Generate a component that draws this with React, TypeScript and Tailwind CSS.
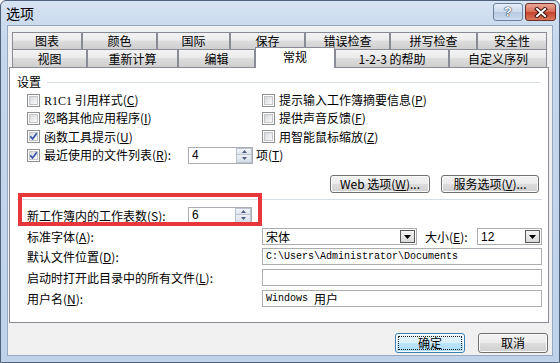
import React from "react";

const cjk = "font-['Noto_Sans_CJK_SC',sans-serif]";
const mono = "font-['Liberation_Mono',monospace] text-[10px]";

const row1 = [
  { label: "图表", w: "w-[70px]" },
  { label: "颜色", w: "w-[75px]" },
  { label: "国际", w: "w-[73px]" },
  { label: "保存", w: "w-[75px]" },
  { label: "错误检查", w: "w-[85px]" },
  { label: "拼写检查", w: "w-[87px]" },
  { label: "安全性", w: "w-[70px]" },
];

const row2 = [
  { label: "视图", w: "w-[75px]" },
  { label: "重新计算", w: "w-[91px]" },
  { label: "编辑", w: "w-[77px]" },
  { label: "常规", w: "w-[80px]", active: true },
  { label: "1-2-3 的帮助", w: "w-[114px]" },
  { label: "自定义序列", w: "w-[98px]" },
];

const tabBg =
  "bg-[linear-gradient(#f3f3f3_0%,#ebebeb_45%,#dddddd_50%,#cfcfcf_100%)]";

function Key({ k }: { k: string }) {
  return (
    <>
      (<span className="underline underline-offset-[1px]">{k}</span>)
    </>
  );
}

function Check({ checked }: { checked?: boolean }) {
  return (
    <span className="relative flex h-[13px] w-[13px] shrink-0 items-center justify-center border border-[#8e8f8f] bg-white">
      <span className="h-[9px] w-[9px] border border-[#c4c6c9] bg-[linear-gradient(135deg,#d6d8db,#fbfbfb)]" />
      {checked && (
        <svg className="absolute left-[1px] top-[1px]" width="9" height="9" viewBox="0 0 9 9">
          <path d="M1.3 4.4 L3.6 6.9 L7.8 1.2" fill="none" stroke="#3657a8" strokeWidth="1.7" />
        </svg>
      )}
    </span>
  );
}

function Spin({ value, w }: { value: string; w: string }) {
  return (
    <div className={`flex h-[17px] border border-[#abadb3] bg-white ${w}`}>
      <span className="flex-1 pl-[3px] font-['Liberation_Sans',sans-serif] text-[12px] leading-[15px]">
        {value}
      </span>
      <div className="flex w-[16px] flex-col">
        <span className="flex h-[7px] items-center justify-center border border-[#b9c3d2] bg-[linear-gradient(#f4f6f9,#dde3ec)]">
          <svg width="5" height="3" viewBox="0 0 5 3">
            <path d="M0 3 L2.5 0 L5 3 Z" fill="#4c5f83" />
          </svg>
        </span>
        <span className="flex h-[8px] items-center justify-center border border-t-0 border-[#b9c3d2] bg-[linear-gradient(#eef1f5,#d6dde8)]">
          <svg width="5" height="3" viewBox="0 0 5 3">
            <path d="M0 0 L2.5 3 L5 0 Z" fill="#4c5f83" />
          </svg>
        </span>
      </div>
    </div>
  );
}

function Select({ value, w, latin }: { value: string; w: string; latin?: boolean }) {
  return (
    <div className={`flex h-[17px] items-center border border-[#abadb3] bg-white pl-[3px] ${w}`}>
      <span className={`flex-1 leading-[14px] ${latin ? "font-['Liberation_Sans',sans-serif] text-[12px]" : ""}`}>
        {value}
      </span>
      <span className="mr-px flex h-[13px] w-[15px] items-center justify-center border border-[#5a5a5a] bg-[linear-gradient(#f5f5f5,#d8d8d8)]">
        <svg width="7" height="4" viewBox="0 0 7 4">
          <path d="M0 0 L7 0 L3.5 4 Z" fill="#000" />
        </svg>
      </span>
    </div>
  );
}

function Field({ children }: { children?: React.ReactNode }) {
  return (
    <div className="flex h-[17px] w-[280px] items-center border border-[#abadb3] bg-white pl-[3px] leading-[14px]">
      {children}
    </div>
  );
}

const btn =
  "flex h-[18px] items-center justify-center rounded-[3px] border border-[#707070] bg-[linear-gradient(#f2f2f2_0%,#ebebeb_49%,#dddddd_50%,#cfcfcf_100%)] shadow-[inset_0_0_0_1px_#fbfbfb] text-[12px] leading-[14px]";

export default function App() {
  return (
    <div className={`h-[363px] w-[560px] overflow-hidden bg-white text-[12px] leading-[14px] text-black ${cjk}`}>
      <div className="flex h-[363px] w-[560px] flex-col rounded-t-[6px] border border-[#50627a] bg-[linear-gradient(#d6e3f2,#c4d7ec_40px,#bed2ea)]">
        {/* title bar */}
        <div className="flex h-[24px] shrink-0 items-start">
          <span className="pl-[5px] pt-[4px] text-[14px] leading-[16px]">选项</span>
          <div className="ml-auto mr-[3px] mt-[2px] flex gap-[2px]">
            <span className="flex h-[18px] w-[30px] items-center justify-center rounded-[3px] border border-[#6b819f] bg-[linear-gradient(#e6eef8,#cbdaec_50%,#b6c9e1_51%,#cddced)] font-['Liberation_Sans',sans-serif] text-[13px] font-bold leading-[14px] text-white [text-shadow:0_0_1px_#26395a,0_0_1px_#26395a,0_0_1px_#26395a]">
              ?
            </span>
            <span className="flex h-[18px] w-[31px] items-center justify-center rounded-[3px] border border-[#6e2c22] bg-[linear-gradient(#eba797,#d66c56_50%,#c3432b_51%,#d8775c)]">
              <svg width="14" height="11" viewBox="0 0 14 11">
                <path d="M3 2 L11 9 M11 2 L3 9" stroke="#3b1510" strokeWidth="4" strokeLinecap="square" />
                <path d="M3 2 L11 9 M11 2 L3 9" stroke="#fff" strokeWidth="2" strokeLinecap="square" />
              </svg>
            </span>
          </div>
        </div>

        {/* content */}
        <div className="ml-[6px] flex h-[331px] w-[546px] flex-col border border-[#97a9c1] bg-[#f0f0f0]">
          {/* tabs */}
          <div className="ml-[4px] mt-[6px] flex">
            {row1.map((t) => (
              <div
                key={t.label}
                className={`flex h-[17px] items-center justify-center border border-b-0 border-[#898c95] ${tabBg} ${t.w}`}
              >
                {t.label}
              </div>
            ))}
          </div>
          <div className="ml-[4px] flex h-[18px] items-start">
            {row2.map((t) =>
              t.active ? (
                <div
                  key={t.label}
                  className={`relative z-10 -mt-[2px] flex h-[21px] items-center justify-center border border-b-0 border-[#898c95] bg-white pb-[2px] ${t.w}`}
                >
                  {t.label}
                </div>
              ) : (
                <div
                  key={t.label}
                  className={`flex h-[18px] items-center justify-center border border-b-0 border-[#898c95] ${tabBg} ${t.w}`}
                >
                  {t.label}
                </div>
              )
            )}
          </div>

          {/* panel */}
          <div className="relative ml-[1px] flex h-[256px] w-[540px] flex-col border border-[#898c95] bg-white">
            <div className="mt-[7px] flex h-[14px] items-center pl-[7px] pr-[8px]">
              <span>设置</span>
              <span className="ml-[6px] h-px flex-1 bg-[#d5dfe5]" />
            </div>

            <div className="mt-[2px] grid grid-cols-[235px_1fr] pl-[17px]">
              <div className="flex h-[18px] items-center gap-[4px]">
                <Check />
                <span>
                  <span className="font-['Liberation_Serif',serif]">R1C1</span> 引用样式<Key k="C" />
                </span>
              </div>
              <div className="flex h-[18px] items-center gap-[4px]">
                <Check />
                <span>
                  提示输入工作簿摘要信息<Key k="P" />
                </span>
              </div>
              <div className="flex h-[18px] items-center gap-[4px]">
                <Check />
                <span>
                  忽略其他应用程序<Key k="I" />
                </span>
              </div>
              <div className="flex h-[18px] items-center gap-[4px]">
                <Check />
                <span>
                  提供声音反馈<Key k="F" />
                </span>
              </div>
              <div className="flex h-[19px] items-center gap-[4px]">
                <Check checked />
                <span>
                  函数工具提示<Key k="U" />
                </span>
              </div>
              <div className="flex h-[19px] items-center gap-[4px]">
                <Check />
                <span>
                  用智能鼠标缩放<Key k="Z" />
                </span>
              </div>
            </div>

            <div className="flex h-[18px] items-center pl-[17px]">
              <Check checked />
              <span className="ml-[4px] w-[144px]">
                最近使用的文件列表<Key k="R" />:
              </span>
              <Spin value="4" w="w-[65px]" />
              <span className="ml-[3px]">
                项<Key k="T" />
              </span>
            </div>

            <div className="mt-[11px] flex justify-end gap-[11px] pr-[9px]">
              <button className={`${btn} w-[100px]`}>
                Web 选项<Key k="W" />...
              </button>
              <button className={`${btn} w-[98px]`}>
                服务选项<Key k="V" />...
              </button>
            </div>

            <div className="ml-[7px] mr-[6px] mt-[6px] h-px bg-[#d5dfe5]" />

            <div className="mt-[7px] flex h-[17px] items-center pl-[17px]">
              <span className="w-[161px]">
                新工作簿内的工作表数<Key k="S" />:
              </span>
              <Spin value="6" w="w-[64px]" />
            </div>

            <div className="mt-[4px] flex h-[17px] items-center pl-[17px]">
              <span className="w-[235px]">
                标准字体<Key k="A" />:
              </span>
              <Select value="宋体" w="w-[155px]" />
              <span className="ml-[8px] w-[52px]">
                大小<Key k="E" />:
              </span>
              <Select value="12" w="w-[65px]" latin />
            </div>

            <div className="mt-[3px] flex h-[17px] items-center pl-[17px]">
              <span className="w-[235px]">
                默认文件位置<Key k="D" />:
              </span>
              <Field>
                <span className={mono}>{"C:\\Users\\Administrator\\Documents"}</span>
              </Field>
            </div>

            <div className="mt-[4px] flex h-[17px] items-center pl-[17px]">
              <span className="w-[235px]">
                启动时打开此目录中的所有文件<Key k="L" />:
              </span>
              <Field />
            </div>

            <div className="mt-[4px] flex h-[17px] items-center pl-[17px]">
              <span className="w-[235px]">
                用户名<Key k="N" />:
              </span>
              <Field>
                <span className={`${mono} whitespace-pre`}>{"Windows "}</span>
                <span>用户</span>
              </Field>
            </div>

            {/* highlight annotation */}
            <div className="absolute left-[8px] top-[125px] h-[33px] w-[244px] border-[4px] border-[#e8373b]" />
          </div>

          {/* dialog buttons */}
          <div className="mr-[4px] mt-[10px] flex justify-end gap-[13px]">
            <button className="flex h-[20px] w-[70px] items-center justify-center rounded-[3px] border border-[#3c7fb1] bg-[linear-gradient(#eaf6fd_0%,#d9f0fc_49%,#bee6fd_50%,#a7d9f5_100%)] p-[2px] shadow-[inset_0_0_0_1px_#fdfdfd]">
              <span className="flex h-full w-full items-center justify-center border border-dotted border-[#222]">
                确定
              </span>
            </button>
            <button className={`${btn} h-[20px] w-[70px]`}>取消</button>
          </div>
        </div>
      </div>
    </div>
  );
}
